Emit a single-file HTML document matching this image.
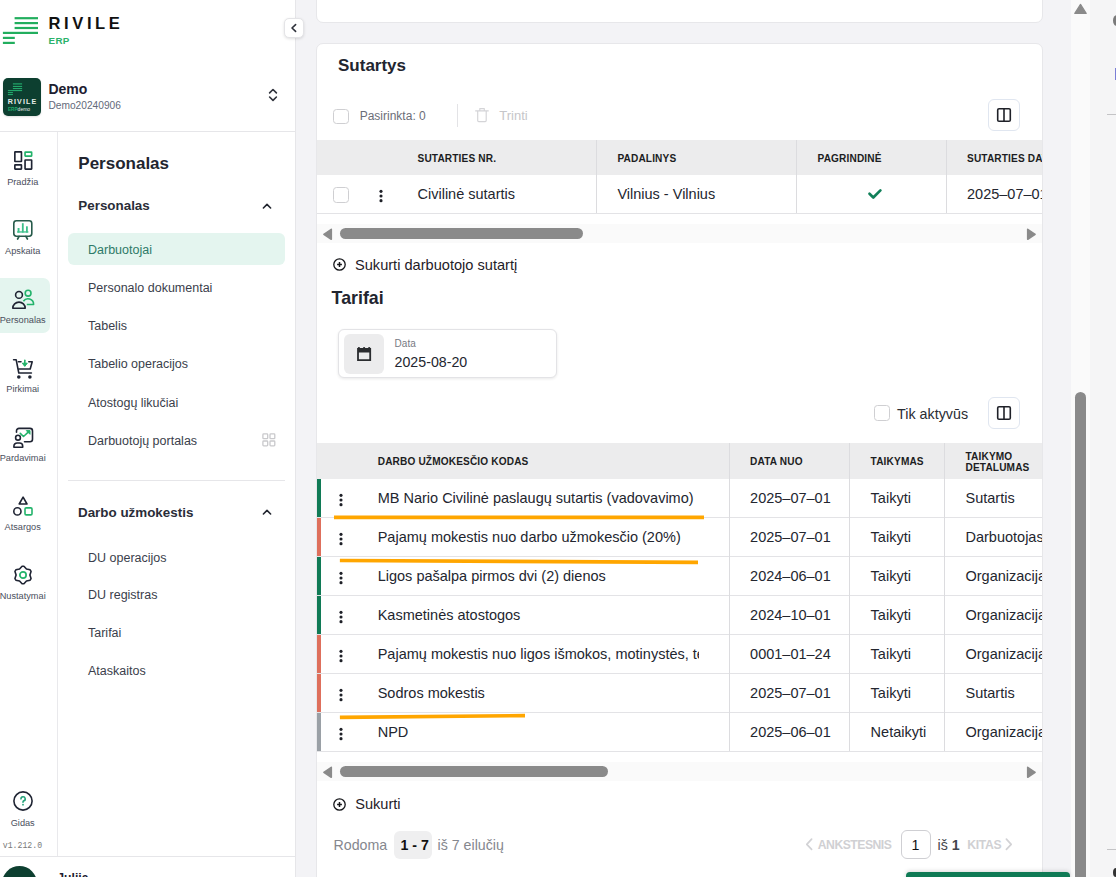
<!DOCTYPE html>
<html><head><meta charset="utf-8"><style>
html,body{margin:0;padding:0;width:1116px;height:877px;overflow:hidden;background:#f3f3f6}
body{position:relative;font-family:"Liberation Sans",sans-serif}
.t{position:absolute;line-height:1;white-space:nowrap}
</style></head><body>
<div style="position:absolute;left:0px;top:0px;width:1116px;height:877px;background:#f3f3f6"></div>
<div style="position:absolute;left:0px;top:0px;width:296px;height:877px;background:#fff;border-right:1px solid #e6e6e9;box-sizing:border-box"></div>
<div style="position:absolute;left:1071px;top:0px;width:19px;height:877px;background:#fafafa"></div>
<div style="position:absolute;left:1090px;top:0px;width:26px;height:877px;background:#f5f5f6"></div>
<div style="position:absolute;left:316px;top:-20px;width:727px;height:43px;background:#fff;border:1px solid #e7e7ea;border-radius:7px;box-sizing:border-box"></div>
<div style="position:absolute;left:316px;top:43px;width:727px;height:900px;background:#fff;border:1px solid #e7e7ea;border-radius:7px;box-sizing:border-box"></div>
<svg style="position:absolute;left:0;top:0" width="60" height="50" viewBox="0 0 60 50">
<g fill="#22ae5e">
<rect x="14.6" y="17.1" width="23.4" height="2.2"/>
<rect x="14.6" y="22.0" width="23.4" height="2.2"/>
<rect x="14.6" y="26.9" width="23.4" height="2.2"/>
<rect x="2.9" y="31.8" width="35.1" height="2.2"/>
<rect x="2.9" y="36.8" width="11.9" height="2.2"/>
<rect x="2.9" y="41.8" width="11.9" height="2.2"/>
</g></svg>
<div class="t" style="left:48.60px;top:15.23px;font-size:16.5px;font-weight:700;color:#111;font-family:'Liberation Sans', sans-serif;letter-spacing:3.6px">RIVILE</div>
<div class="t" style="left:48.60px;top:35.80px;font-size:9.8px;font-weight:700;color:#2bb26b;font-family:'Liberation Sans', sans-serif;letter-spacing:0.3px">ERP</div>
<div style="position:absolute;left:3px;top:78px;width:38px;height:38px;border-radius:5px;background:#0d3f30;overflow:hidden;box-shadow:0 1px 2px rgba(0,0,0,.12)">
<svg style="position:absolute;left:0;top:0" width="38" height="38" viewBox="0 0 38 38">
<g fill="#22a86a">
<rect x="9.9" y="5.3" width="9.2" height="1.2"/>
<rect x="9.9" y="7.9" width="9.2" height="1.1"/>
<rect x="9.9" y="10" width="9.2" height="1.1"/>
<rect x="4.9" y="12" width="14.2" height="1.1"/>
<rect x="4.9" y="14" width="5" height="1.1"/>
<rect x="4.9" y="16" width="5" height="1.1"/>
</g>
<text x="4.8" y="26.2" font-family="Liberation Sans" font-weight="700" font-size="7.1" fill="#e6ece8" letter-spacing="1.1">RIVILE</text>
<text transform="translate(4.9 32.8) scale(0.47)" x="0" y="0" font-family="Liberation Sans" font-weight="700" font-size="10" fill="#22a86a">ERP</text>
<text transform="translate(14.6 32.8) scale(0.5)" x="0" y="0" font-family="Liberation Sans" font-weight="400" font-size="10" fill="#e6ece8">demo</text>
</svg></div>
<div class="t" style="left:48.40px;top:82.35px;font-size:14px;font-weight:700;color:#1d2030;font-family:'Liberation Sans', sans-serif;">Demo</div>
<div class="t" style="left:48.40px;top:100.57px;font-size:10.2px;font-weight:400;color:#646a7a;font-family:'Liberation Sans', sans-serif;">Demo20240906</div>
<svg style="position:absolute;left:266px;top:86px" width="14" height="18" viewBox="0 0 14 18">
<path d="M3.6 6.9 L7 3.5 L10.4 6.9 M3.6 11 L7 14.4 L10.4 11" fill="none" stroke="#2f323b" stroke-width="1.6" stroke-linecap="round" stroke-linejoin="round"/></svg>
<div style="position:absolute;left:0px;top:131px;width:295px;height:1px;background:#e6e6e9"></div>
<div style="position:absolute;left:57px;top:132px;width:1px;height:724px;background:#e9e9ec"></div>
<div style="position:absolute;left:0px;top:856px;width:295px;height:1px;background:#e6e6e9"></div>
<div style="position:absolute;left:284px;top:18px;width:19.5px;height:19.5px;box-sizing:border-box;background:#fff;border:1px solid #e4e4e7;border-radius:5px;box-shadow:0 1px 3px rgba(0,0,0,.12)">
<svg style="position:absolute;left:0;top:0" width="17" height="17" viewBox="0 0 17 17"><path d="M10.6 5.6 L7 9 L10.6 12.4" fill="none" stroke="#2f323b" stroke-width="1.6" stroke-linecap="round" stroke-linejoin="round"/></svg></div>
<div style="position:absolute;left:0px;top:278px;width:50px;height:55px;background:#e4f5ef;border-radius:0 7px 7px 0"></div>
<svg style="position:absolute;left:13.7px;top:151.3px" width="19" height="19" viewBox="0 0 19 19" fill="none" stroke-width="1.65">
<rect x="0.85" y="0.85" width="6.6" height="9.6" rx="0.3" stroke="#1f2433"/>
<rect x="11.05" y="1.15" width="6.6" height="3.9" rx="0.3" stroke="#23b36b"/>
<rect x="0.85" y="13.85" width="6.6" height="4.2" rx="0.3" stroke="#1f2433"/>
<rect x="11.05" y="8.95" width="6.6" height="9.1" rx="0.3" stroke="#1f2433"/>
</svg>
<div class="t" style="left:-7.3px;width:60px;text-align:center;top:178.01px;font-size:9.2px;color:#4a4e5c">Pradžia</div>
<svg style="position:absolute;left:13.3px;top:220.1px" width="20" height="20" viewBox="0 0 20 20" fill="none">
<rect x="0.8" y="0.8" width="18" height="15.4" rx="2.6" stroke="#275b4b" stroke-width="1.6"/>
<path d="M6.1 16.4 L4.6 19 M12.9 16.4 L14.4 19" stroke="#275b4b" stroke-width="1.7" stroke-linecap="round"/>
<g fill="#3dc08b"><rect x="4.6" y="8" width="1.9" height="4.6"/><rect x="8.9" y="3.2" width="1.8" height="9.4"/><rect x="13" y="6.3" width="1.8" height="6.3"/><rect x="4.1" y="11.3" width="11.3" height="1.3"/></g>
</svg>
<div class="t" style="left:-7.3px;width:60px;text-align:center;top:246.61px;font-size:9.2px;color:#4a4e5c">Apskaita</div>
<svg style="position:absolute;left:11px;top:288px" width="25" height="23" viewBox="0 0 25 23" fill="none" stroke-width="1.6">
<circle cx="8" cy="6.9" r="3.4" stroke="#1f2433"/>
<path d="M1.8 20.3 A6.2 6.2 0 0 1 14.2 20.3 Z" stroke="#1f2433" stroke-linejoin="round"/>
<circle cx="17.1" cy="5.2" r="2.9" stroke="#23b36b"/>
<path d="M12.4 13.2 A5.6 5.6 0 0 1 22.6 16.5 L15.8 16.5" stroke="#23b36b" stroke-linejoin="round"/>
</svg>
<div class="t" style="left:-7.3px;width:60px;text-align:center;top:315.91px;font-size:9.2px;color:#4a4e5c">Personalas</div>
<svg style="position:absolute;left:12px;top:357.5px" width="22" height="22" viewBox="0 0 22 22" fill="none">
<path d="M1.6 1.8 H4.2 L6.8 15 H19.4" stroke="#1f2433" stroke-width="1.6" stroke-linecap="round" stroke-linejoin="round"/>
<path d="M6.4 3.8 H9 M16.8 3.8 H20.2 L18.2 11 H6.8" stroke="#1f2433" stroke-width="1.6" stroke-linecap="round" stroke-linejoin="round"/>
<circle cx="6.8" cy="19" r="1.8" fill="#1f2433"/><circle cx="17.9" cy="19" r="1.8" fill="#1f2433"/>
<path d="M12.8 2.2 V6.8" stroke="#23b36b" stroke-width="1.6" stroke-linecap="round"/>
<path d="M10.3 5.2 H15.3 L12.8 8.4 Z" fill="#23b36b" stroke="#23b36b" stroke-width="1" stroke-linejoin="round"/>
</svg>
<div class="t" style="left:-7.3px;width:60px;text-align:center;top:385.11px;font-size:9.2px;color:#4a4e5c">Pirkimai</div>
<svg style="position:absolute;left:12px;top:426.5px" width="22" height="22" viewBox="0 0 22 22" fill="none">
<path d="M4.5 5.3 V3.9 A2.5 2.5 0 0 1 7 1.4 H18 A2.5 2.5 0 0 1 20.5 3.9 V12.3 A2.5 2.5 0 0 1 18 14.8 H12.5" stroke="#1f2433" stroke-width="1.6" stroke-linecap="round"/>
<circle cx="6" cy="10.7" r="2.4" stroke="#1f2433" stroke-width="1.6"/>
<path d="M1.9 20.2 V19.2 A3.2 3.2 0 0 1 5.1 16 H7.5 A3.2 3.2 0 0 1 10.7 19.2 V20.2 Z" stroke="#1f2433" stroke-width="1.6" stroke-linejoin="round"/>
<path d="M8.3 6.4 L11.5 9.5 L16.5 4.9" stroke="#23b36b" stroke-width="1.6" stroke-linecap="round" stroke-linejoin="round"/>
<path d="M14.3 3.6 H18 V7.3 Z" fill="#23b36b" stroke="#23b36b" stroke-width="1" stroke-linejoin="round"/>
</svg>
<div class="t" style="left:-7.3px;width:60px;text-align:center;top:454.01px;font-size:9.2px;color:#4a4e5c">Pardavimai</div>
<svg style="position:absolute;left:12px;top:495px" width="22" height="22" viewBox="0 0 22 22" fill="none" stroke-width="1.6">
<path d="M11.1 2.1 L15 9 H7.2 Z" stroke="#1f2433" stroke-linejoin="round"/>
<circle cx="5.4" cy="16.4" r="3.6" stroke="#1f2433"/>
<rect x="13" y="12.9" width="7" height="7" rx="1.2" stroke="#23b36b"/>
</svg>
<div class="t" style="left:-7.3px;width:60px;text-align:center;top:523.11px;font-size:9.2px;color:#4a4e5c">Atsargos</div>
<svg style="position:absolute;left:13px;top:564.8px" width="20" height="20" viewBox="0 0 20 20" fill="none">
<path d="M9.08 1.25 L10.92 1.25 L13.45 4.02 L17.12 4.83 L18.04 6.42 L16.90 10.00 L18.04 13.58 L17.12 15.17 L13.45 15.98 L10.92 18.75 L9.08 18.75 L6.55 15.98 L2.88 15.17 L1.96 13.58 L3.10 10.00 L1.96 6.42 L2.88 4.83 L6.55 4.02 Z" stroke="#1f2433" stroke-width="1.6" stroke-linejoin="round"/>
<circle cx="10" cy="10" r="3.15" stroke="#23b36b" stroke-width="1.7"/>
</svg>
<div class="t" style="left:-7.3px;width:60px;text-align:center;top:591.71px;font-size:9.2px;color:#4a4e5c">Nustatymai</div>
<svg style="position:absolute;left:13px;top:790.5px" width="20" height="20" viewBox="0 0 20 20" fill="none">
<circle cx="10" cy="10" r="9.1" stroke="#1f2433" stroke-width="1.6"/>
<path d="M8 7.9 A2.1 2.1 0 1 1 10.8 9.8 Q10 10.2 10 11 V11.3" stroke="#25a27a" stroke-width="1.6" stroke-linecap="round"/>
<circle cx="10" cy="13.7" r="0.9" fill="#25a27a"/>
</svg>
<div class="t" style="left:-7.3px;width:60px;text-align:center;top:818.81px;font-size:9.2px;color:#4a4e5c">Gidas</div>
<div class="t" style="left:2.80px;top:841.97px;font-size:8.2px;font-weight:400;color:#7a7a7a;font-family:'Liberation Mono', monospace;">v1.212.0</div>
<div style="position:absolute;left:2.2px;top:866px;width:35px;height:35px;background:#0d3f30;border-radius:50%"></div>
<div class="t" style="left:57.30px;top:871.67px;font-size:12.2px;font-weight:700;color:#1d2030;font-family:'Liberation Sans', sans-serif;">Julija</div>
<div class="t" style="left:78.30px;top:154.61px;font-size:17px;font-weight:700;color:#22252f;font-family:'Liberation Sans', sans-serif;">Personalas</div>
<div class="t" style="left:78.30px;top:198.96px;font-size:13.4px;font-weight:700;color:#2a2d38;font-family:'Liberation Sans', sans-serif;">Personalas</div>
<svg style="position:absolute;left:260px;top:200px" width="14" height="11" viewBox="0 0 14 11"><path d="M3.4 8 L7 4.4 L10.6 8" fill="none" stroke="#22252f" stroke-width="1.6" stroke-linecap="round" stroke-linejoin="round"/></svg>
<div style="position:absolute;left:68.2px;top:233.1px;width:216.5px;height:32.3px;background:#e4f5ef;border-radius:6px"></div>
<div class="t" style="left:88.00px;top:244.32px;font-size:12.5px;font-weight:400;color:#2e7a68;font-family:'Liberation Sans', sans-serif;">Darbuotojai</div>
<div class="t" style="left:88.00px;top:282.02px;font-size:12.5px;font-weight:400;color:#3a3e4b;font-family:'Liberation Sans', sans-serif;">Personalo dokumentai</div>
<div class="t" style="left:88.00px;top:320.32px;font-size:12.5px;font-weight:400;color:#3a3e4b;font-family:'Liberation Sans', sans-serif;">Tabelis</div>
<div class="t" style="left:88.00px;top:358.32px;font-size:12.5px;font-weight:400;color:#3a3e4b;font-family:'Liberation Sans', sans-serif;">Tabelio operacijos</div>
<div class="t" style="left:88.00px;top:397.22px;font-size:12.5px;font-weight:400;color:#3a3e4b;font-family:'Liberation Sans', sans-serif;">Atostogų likučiai</div>
<div class="t" style="left:88.00px;top:435.12px;font-size:12.5px;font-weight:400;color:#3a3e4b;font-family:'Liberation Sans', sans-serif;">Darbuotojų portalas</div>
<svg style="position:absolute;left:262px;top:433px" width="14" height="14" viewBox="0 0 14 14" fill="none" stroke="#c9c9cc" stroke-width="1.3">
<rect x="0.9" y="0.9" width="4.8" height="4.8" rx="0.8"/><rect x="8" y="0.9" width="4.8" height="4.8" rx="0.8"/>
<rect x="0.9" y="8" width="4.8" height="4.8" rx="0.8"/><rect x="8" y="8" width="4.8" height="4.8" rx="0.8"/></svg>
<div style="position:absolute;left:68px;top:480px;width:217px;height:1px;background:#e6e6e9"></div>
<div class="t" style="left:78.00px;top:505.66px;font-size:13.4px;font-weight:700;color:#2a2d38;font-family:'Liberation Sans', sans-serif;">Darbo užmokestis</div>
<svg style="position:absolute;left:260px;top:506px" width="14" height="11" viewBox="0 0 14 11"><path d="M3.4 8 L7 4.4 L10.6 8" fill="none" stroke="#22252f" stroke-width="1.6" stroke-linecap="round" stroke-linejoin="round"/></svg>
<div class="t" style="left:88.00px;top:551.82px;font-size:12.5px;font-weight:400;color:#3a3e4b;font-family:'Liberation Sans', sans-serif;">DU operacijos</div>
<div class="t" style="left:88.00px;top:589.32px;font-size:12.5px;font-weight:400;color:#3a3e4b;font-family:'Liberation Sans', sans-serif;">DU registras</div>
<div class="t" style="left:88.00px;top:627.32px;font-size:12.5px;font-weight:400;color:#3a3e4b;font-family:'Liberation Sans', sans-serif;">Tarifai</div>
<div class="t" style="left:88.00px;top:665.32px;font-size:12.5px;font-weight:400;color:#3a3e4b;font-family:'Liberation Sans', sans-serif;">Ataskaitos</div>
<div class="t" style="left:338.00px;top:57.01px;font-size:17px;font-weight:700;color:#22252f;font-family:'Liberation Sans', sans-serif;">Sutartys</div>
<div style="position:absolute;left:333.2px;top:108.5px;width:15.7px;height:15.7px;box-sizing:border-box;border:1px solid #cfcfd2;border-radius:3.5px;background:#fff"></div>
<div class="t" style="left:359.70px;top:109.84px;font-size:12px;font-weight:400;color:#6b6e78;font-family:'Liberation Sans', sans-serif;">Pasirinkta: 0</div>
<div style="position:absolute;left:457px;top:103.5px;width:1px;height:23px;background:#e3e3e6"></div>
<svg style="position:absolute;left:474px;top:107px" width="16" height="16" viewBox="0 0 16 16" fill="none" stroke="#d4d4d7" stroke-width="1.15" stroke-linejoin="round">
<path d="M1.2 3.9 H14.7 M5.8 3.9 V1.6 H10.3 V3.9 M3.7 3.9 V13.6 A1 1 0 0 0 4.7 14.6 H11.2 A1 1 0 0 0 12.2 13.6 V3.9"/></svg>
<div class="t" style="left:499.30px;top:109.00px;font-size:13px;font-weight:400;color:#c6c6c9;font-family:'Liberation Sans', sans-serif;">Trinti</div>
<div style="position:absolute;left:988px;top:99px;width:32px;height:32px;box-sizing:border-box;border:1px solid #e0e6f0;border-radius:6px;background:#fff">
<svg style="position:absolute;left:7.0px;top:7.0px" width="16" height="16" viewBox="0 0 16 16" fill="none" stroke="#1f2128" stroke-width="1.6">
<rect x="1.7" y="1.7" width="12.6" height="12.6" rx="1.3"/><path d="M8 1.6 V14.4"/></svg></div>
<div style="position:absolute;left:317px;top:140px;width:725px;height:34.5px;background:#ececed"></div>
<div style="position:absolute;left:317px;top:212.8px;width:725px;height:1px;background:#e3e3e6"></div>
<div style="position:absolute;left:596px;top:140px;width:1px;height:73px;background:#dcdcdf"></div>
<div style="position:absolute;left:796px;top:140px;width:1px;height:73px;background:#dcdcdf"></div>
<div style="position:absolute;left:946px;top:140px;width:1px;height:73px;background:#dcdcdf"></div>
<div class="t" style="left:417.50px;top:153.65px;font-size:10.1px;font-weight:700;color:#1c1d22;font-family:'Liberation Sans', sans-serif;letter-spacing:0.15px">SUTARTIES NR.</div>
<div class="t" style="left:617.40px;top:153.65px;font-size:10.1px;font-weight:700;color:#1c1d22;font-family:'Liberation Sans', sans-serif;letter-spacing:0.15px">PADALINYS</div>
<div class="t" style="left:817.50px;top:153.65px;font-size:10.1px;font-weight:700;color:#1c1d22;font-family:'Liberation Sans', sans-serif;letter-spacing:0.15px">PAGRINDINĖ</div>
<div style="position:absolute;left:317px;top:140px;width:725px;height:80px;overflow:hidden">
<div class="t" style="left:650.00px;top:13.65px;font-size:10.1px;font-weight:700;color:#1c1d22;font-family:'Liberation Sans', sans-serif;letter-spacing:0.15px">SUTARTIES DATA</div>
<div class="t" style="left:650.00px;top:47.13px;font-size:14.5px;font-weight:400;color:#23262f;font-family:'Liberation Sans', sans-serif;">2025–07–01</div>
</div>
<div style="position:absolute;left:333.2px;top:187px;width:15.7px;height:15.7px;box-sizing:border-box;border:1px solid #cfcfd2;border-radius:3.5px;background:#fff"></div>
<svg style="position:absolute;left:377.7px;top:188px" width="6" height="16" viewBox="0 0 6 16" fill="#1f2128"><circle cx="3" cy="3.35" r="1.55"/><circle cx="3" cy="8" r="1.55"/><circle cx="3" cy="12.65" r="1.55"/></svg>
<div class="t" style="left:417.50px;top:187.13px;font-size:14.5px;font-weight:400;color:#23262f;font-family:'Liberation Sans', sans-serif;">Civilinė sutartis</div>
<div class="t" style="left:617.40px;top:187.13px;font-size:14.5px;font-weight:400;color:#23262f;font-family:'Liberation Sans', sans-serif;">Vilnius - Vilnius</div>
<svg style="position:absolute;left:865px;top:186px" width="19" height="15" viewBox="0 0 19 15"><path d="M4.5 7.8 L8.3 11.5 L15.4 4.4" fill="none" stroke="#12805a" stroke-width="2.7" stroke-linecap="round" stroke-linejoin="round"/></svg>
<div style="position:absolute;left:317px;top:224px;width:725px;height:19px;background:#fafafa"></div>
<svg style="position:absolute;left:322px;top:227px" width="12" height="14" viewBox="0 0 12 14"><path d="M9.3 2.3 V12.3 L1.9 7.3 Z" fill="#8a8a8a" stroke="#8a8a8a" stroke-width="1.6" stroke-linejoin="round"/></svg>
<div style="position:absolute;left:340px;top:228px;width:243px;height:11px;background:#8a8a8a;border-radius:6px"></div>
<svg style="position:absolute;left:1025px;top:227px" width="12" height="14" viewBox="0 0 12 14"><path d="M2.7 2.3 V12.3 L10.1 7.3 Z" fill="#8a8a8a" stroke="#8a8a8a" stroke-width="1.6" stroke-linejoin="round"/></svg>
<svg style="position:absolute;left:332.05px;top:256.95px" width="15" height="15" viewBox="0 0 15 15" fill="none" stroke="#15161a" stroke-width="1.3">
<circle cx="7.5" cy="7.5" r="5.7"/><path d="M7.5 5.1 V9.9 M5.1 7.5 H9.9" stroke-linecap="butt" stroke-width="1.5"/></svg>
<div class="t" style="left:355.00px;top:258.14px;font-size:14.6px;font-weight:400;color:#1f2128;font-family:'Liberation Sans', sans-serif;">Sukurti darbuotojo sutartį</div>
<div class="t" style="left:331.60px;top:289.93px;font-size:17.8px;font-weight:700;color:#22252f;font-family:'Liberation Sans', sans-serif;">Tarifai</div>
<div style="position:absolute;left:337.5px;top:329.2px;width:219px;height:49px;box-sizing:border-box;border:1px solid #e3e3e6;border-radius:6px;background:#fff;box-shadow:0 1px 3px rgba(0,0,0,.09)"></div>
<div style="position:absolute;left:344px;top:334px;width:40px;height:40px;background:#ececed;border-radius:6px"></div>
<svg style="position:absolute;left:356px;top:346px" width="16" height="16" viewBox="0 0 16 16">
<path fill-rule="evenodd" fill="#2a2c2f" d="M1.1 1.9 H15.1 V15.1 H1.1 Z M2.9 6.4 V13.2 H13.3 V6.4 Z"/>
<circle cx="2.9" cy="2" r="1.1" fill="#2a2c2f"/><circle cx="8.1" cy="2" r="1.1" fill="#2a2c2f"/><circle cx="13.2" cy="2" r="1.1" fill="#2a2c2f"/>
</svg>
<div class="t" style="left:394.60px;top:338.74px;font-size:10px;font-weight:400;color:#777a82;font-family:'Liberation Sans', sans-serif;">Data</div>
<div class="t" style="left:394.60px;top:354.98px;font-size:14.2px;font-weight:400;color:#23262f;font-family:'Liberation Sans', sans-serif;">2025-08-20</div>
<div style="position:absolute;left:874.3px;top:404.9px;width:15.7px;height:15.7px;box-sizing:border-box;border:1px solid #cfcfd2;border-radius:3.5px;background:#fff"></div>
<div class="t" style="left:897.10px;top:406.90px;font-size:14.3px;font-weight:400;color:#2a2c33;font-family:'Liberation Sans', sans-serif;">Tik aktyvūs</div>
<div style="position:absolute;left:988px;top:397px;width:32px;height:31.5px;box-sizing:border-box;border:1px solid #e0e6f0;border-radius:6px;background:#fff">
<svg style="position:absolute;left:7.0px;top:6.8px" width="16" height="16" viewBox="0 0 16 16" fill="none" stroke="#1f2128" stroke-width="1.6">
<rect x="1.7" y="1.7" width="12.6" height="12.6" rx="1.3"/><path d="M8 1.6 V14.4"/></svg></div>
<div style="position:absolute;left:317px;top:443px;width:725px;height:36px;background:#ececed"></div>
<div style="position:absolute;left:317px;top:517px;width:725px;height:1px;background:#e3e3e6"></div>
<div style="position:absolute;left:317px;top:556px;width:725px;height:1px;background:#e3e3e6"></div>
<div style="position:absolute;left:317px;top:595px;width:725px;height:1px;background:#e3e3e6"></div>
<div style="position:absolute;left:317px;top:634px;width:725px;height:1px;background:#e3e3e6"></div>
<div style="position:absolute;left:317px;top:673px;width:725px;height:1px;background:#e3e3e6"></div>
<div style="position:absolute;left:317px;top:712px;width:725px;height:1px;background:#e3e3e6"></div>
<div style="position:absolute;left:317px;top:751px;width:725px;height:1px;background:#e3e3e6"></div>
<div style="position:absolute;left:729px;top:443px;width:1px;height:308px;background:#dcdcdf"></div>
<div style="position:absolute;left:849px;top:443px;width:1px;height:308px;background:#dcdcdf"></div>
<div style="position:absolute;left:944px;top:443px;width:1px;height:308px;background:#dcdcdf"></div>
<div class="t" style="left:377.70px;top:457.05px;font-size:10.1px;font-weight:700;color:#1c1d22;font-family:'Liberation Sans', sans-serif;letter-spacing:0.15px">DARBO UŽMOKESČIO KODAS</div>
<div class="t" style="left:750.10px;top:457.05px;font-size:10.1px;font-weight:700;color:#1c1d22;font-family:'Liberation Sans', sans-serif;letter-spacing:0.15px">DATA NUO</div>
<div class="t" style="left:870.60px;top:457.05px;font-size:10.1px;font-weight:700;color:#1c1d22;font-family:'Liberation Sans', sans-serif;letter-spacing:0.15px">TAIKYMAS</div>
<div class="t" style="left:965.50px;top:452.05px;font-size:10.1px;font-weight:700;color:#1c1d22;font-family:'Liberation Sans', sans-serif;letter-spacing:0.15px">TAIKYMO</div>
<div class="t" style="left:965.50px;top:463.25px;font-size:10.1px;font-weight:700;color:#1c1d22;font-family:'Liberation Sans', sans-serif;letter-spacing:0.15px">DETALUMAS</div>
<div style="position:absolute;left:317px;top:479px;width:4px;height:38px;background:#107a56"></div>
<svg style="position:absolute;left:338.2px;top:491.7px" width="6" height="16" viewBox="0 0 6 16" fill="#1f2128"><circle cx="3" cy="3.35" r="1.55"/><circle cx="3" cy="8" r="1.55"/><circle cx="3" cy="12.65" r="1.55"/></svg>
<div style="position:absolute;left:377px;top:479px;width:322px;height:38px;overflow:hidden">
<div class="t" style="left:0.70px;top:11.93px;font-size:14.5px;font-weight:400;color:#23262f;font-family:'Liberation Sans', sans-serif;">MB Nario Civilinė paslaugų sutartis (vadovavimo)</div>
</div>
<div class="t" style="left:750.10px;top:490.93px;font-size:14.5px;font-weight:400;color:#23262f;font-family:'Liberation Sans', sans-serif;">2025–07–01</div>
<div class="t" style="left:870.60px;top:490.93px;font-size:14.5px;font-weight:400;color:#23262f;font-family:'Liberation Sans', sans-serif;">Taikyti</div>
<div style="position:absolute;left:960px;top:479px;width:82px;height:38px;overflow:hidden">
<div class="t" style="left:5.50px;top:11.93px;font-size:14.5px;font-weight:400;color:#23262f;font-family:'Liberation Sans', sans-serif;">Sutartis</div>
</div>
<div style="position:absolute;left:317px;top:518px;width:4px;height:38px;background:#de6f5c"></div>
<svg style="position:absolute;left:338.2px;top:530.7px" width="6" height="16" viewBox="0 0 6 16" fill="#1f2128"><circle cx="3" cy="3.35" r="1.55"/><circle cx="3" cy="8" r="1.55"/><circle cx="3" cy="12.65" r="1.55"/></svg>
<div style="position:absolute;left:377px;top:518px;width:322px;height:38px;overflow:hidden">
<div class="t" style="left:0.70px;top:11.93px;font-size:14.5px;font-weight:400;color:#23262f;font-family:'Liberation Sans', sans-serif;">Pajamų mokestis nuo darbo užmokesčio (20%)</div>
</div>
<div class="t" style="left:750.10px;top:529.93px;font-size:14.5px;font-weight:400;color:#23262f;font-family:'Liberation Sans', sans-serif;">2025–07–01</div>
<div class="t" style="left:870.60px;top:529.93px;font-size:14.5px;font-weight:400;color:#23262f;font-family:'Liberation Sans', sans-serif;">Taikyti</div>
<div style="position:absolute;left:960px;top:518px;width:82px;height:38px;overflow:hidden">
<div class="t" style="left:5.50px;top:11.93px;font-size:14.5px;font-weight:400;color:#23262f;font-family:'Liberation Sans', sans-serif;">Darbuotojas</div>
</div>
<div style="position:absolute;left:317px;top:557px;width:4px;height:38px;background:#107a56"></div>
<svg style="position:absolute;left:338.2px;top:569.7px" width="6" height="16" viewBox="0 0 6 16" fill="#1f2128"><circle cx="3" cy="3.35" r="1.55"/><circle cx="3" cy="8" r="1.55"/><circle cx="3" cy="12.65" r="1.55"/></svg>
<div style="position:absolute;left:377px;top:557px;width:322px;height:38px;overflow:hidden">
<div class="t" style="left:0.70px;top:11.93px;font-size:14.5px;font-weight:400;color:#23262f;font-family:'Liberation Sans', sans-serif;">Ligos pašalpa pirmos dvi (2) dienos</div>
</div>
<div class="t" style="left:750.10px;top:568.93px;font-size:14.5px;font-weight:400;color:#23262f;font-family:'Liberation Sans', sans-serif;">2024–06–01</div>
<div class="t" style="left:870.60px;top:568.93px;font-size:14.5px;font-weight:400;color:#23262f;font-family:'Liberation Sans', sans-serif;">Taikyti</div>
<div style="position:absolute;left:960px;top:557px;width:82px;height:38px;overflow:hidden">
<div class="t" style="left:5.50px;top:11.93px;font-size:14.5px;font-weight:400;color:#23262f;font-family:'Liberation Sans', sans-serif;">Organizacija</div>
</div>
<div style="position:absolute;left:317px;top:596px;width:4px;height:38px;background:#107a56"></div>
<svg style="position:absolute;left:338.2px;top:608.7px" width="6" height="16" viewBox="0 0 6 16" fill="#1f2128"><circle cx="3" cy="3.35" r="1.55"/><circle cx="3" cy="8" r="1.55"/><circle cx="3" cy="12.65" r="1.55"/></svg>
<div style="position:absolute;left:377px;top:596px;width:322px;height:38px;overflow:hidden">
<div class="t" style="left:0.70px;top:11.93px;font-size:14.5px;font-weight:400;color:#23262f;font-family:'Liberation Sans', sans-serif;">Kasmetinės atostogos</div>
</div>
<div class="t" style="left:750.10px;top:607.93px;font-size:14.5px;font-weight:400;color:#23262f;font-family:'Liberation Sans', sans-serif;">2024–10–01</div>
<div class="t" style="left:870.60px;top:607.93px;font-size:14.5px;font-weight:400;color:#23262f;font-family:'Liberation Sans', sans-serif;">Taikyti</div>
<div style="position:absolute;left:960px;top:596px;width:82px;height:38px;overflow:hidden">
<div class="t" style="left:5.50px;top:11.93px;font-size:14.5px;font-weight:400;color:#23262f;font-family:'Liberation Sans', sans-serif;">Organizacija</div>
</div>
<div style="position:absolute;left:317px;top:635px;width:4px;height:38px;background:#de6f5c"></div>
<svg style="position:absolute;left:338.2px;top:647.7px" width="6" height="16" viewBox="0 0 6 16" fill="#1f2128"><circle cx="3" cy="3.35" r="1.55"/><circle cx="3" cy="8" r="1.55"/><circle cx="3" cy="12.65" r="1.55"/></svg>
<div style="position:absolute;left:377px;top:635px;width:322px;height:38px;overflow:hidden">
<div class="t" style="left:0.70px;top:11.93px;font-size:14.5px;font-weight:400;color:#23262f;font-family:'Liberation Sans', sans-serif;">Pajamų mokestis nuo ligos išmokos, motinystės, tėvystės</div>
</div>
<div class="t" style="left:750.10px;top:646.93px;font-size:14.5px;font-weight:400;color:#23262f;font-family:'Liberation Sans', sans-serif;">0001–01–24</div>
<div class="t" style="left:870.60px;top:646.93px;font-size:14.5px;font-weight:400;color:#23262f;font-family:'Liberation Sans', sans-serif;">Taikyti</div>
<div style="position:absolute;left:960px;top:635px;width:82px;height:38px;overflow:hidden">
<div class="t" style="left:5.50px;top:11.93px;font-size:14.5px;font-weight:400;color:#23262f;font-family:'Liberation Sans', sans-serif;">Organizacija</div>
</div>
<div style="position:absolute;left:317px;top:674px;width:4px;height:38px;background:#de6f5c"></div>
<svg style="position:absolute;left:338.2px;top:686.7px" width="6" height="16" viewBox="0 0 6 16" fill="#1f2128"><circle cx="3" cy="3.35" r="1.55"/><circle cx="3" cy="8" r="1.55"/><circle cx="3" cy="12.65" r="1.55"/></svg>
<div style="position:absolute;left:377px;top:674px;width:322px;height:38px;overflow:hidden">
<div class="t" style="left:0.70px;top:11.93px;font-size:14.5px;font-weight:400;color:#23262f;font-family:'Liberation Sans', sans-serif;">Sodros mokestis</div>
</div>
<div class="t" style="left:750.10px;top:685.93px;font-size:14.5px;font-weight:400;color:#23262f;font-family:'Liberation Sans', sans-serif;">2025–07–01</div>
<div class="t" style="left:870.60px;top:685.93px;font-size:14.5px;font-weight:400;color:#23262f;font-family:'Liberation Sans', sans-serif;">Taikyti</div>
<div style="position:absolute;left:960px;top:674px;width:82px;height:38px;overflow:hidden">
<div class="t" style="left:5.50px;top:11.93px;font-size:14.5px;font-weight:400;color:#23262f;font-family:'Liberation Sans', sans-serif;">Sutartis</div>
</div>
<div style="position:absolute;left:317px;top:713px;width:4px;height:38px;background:#9aa0a6"></div>
<svg style="position:absolute;left:338.2px;top:725.7px" width="6" height="16" viewBox="0 0 6 16" fill="#1f2128"><circle cx="3" cy="3.35" r="1.55"/><circle cx="3" cy="8" r="1.55"/><circle cx="3" cy="12.65" r="1.55"/></svg>
<div style="position:absolute;left:377px;top:713px;width:322px;height:38px;overflow:hidden">
<div class="t" style="left:0.70px;top:11.93px;font-size:14.5px;font-weight:400;color:#23262f;font-family:'Liberation Sans', sans-serif;">NPD</div>
</div>
<div class="t" style="left:750.10px;top:724.93px;font-size:14.5px;font-weight:400;color:#23262f;font-family:'Liberation Sans', sans-serif;">2025–06–01</div>
<div class="t" style="left:870.60px;top:724.93px;font-size:14.5px;font-weight:400;color:#23262f;font-family:'Liberation Sans', sans-serif;">Netaikyti</div>
<div style="position:absolute;left:960px;top:713px;width:82px;height:38px;overflow:hidden">
<div class="t" style="left:5.50px;top:11.93px;font-size:14.5px;font-weight:400;color:#23262f;font-family:'Liberation Sans', sans-serif;">Organizacija</div>
</div>
<div style="position:absolute;left:317px;top:762px;width:725px;height:19px;background:#fafafa"></div>
<svg style="position:absolute;left:322px;top:765px" width="12" height="14" viewBox="0 0 12 14"><path d="M9.3 2.3 V12.3 L1.9 7.3 Z" fill="#8a8a8a" stroke="#8a8a8a" stroke-width="1.6" stroke-linejoin="round"/></svg>
<div style="position:absolute;left:340px;top:766px;width:268px;height:11px;background:#8a8a8a;border-radius:6px"></div>
<svg style="position:absolute;left:1025px;top:765px" width="12" height="14" viewBox="0 0 12 14"><path d="M2.7 2.3 V12.3 L10.1 7.3 Z" fill="#8a8a8a" stroke="#8a8a8a" stroke-width="1.6" stroke-linejoin="round"/></svg>
<svg style="position:absolute;left:332px;top:796.75px" width="15" height="15" viewBox="0 0 15 15" fill="none" stroke="#15161a" stroke-width="1.3">
<circle cx="7.5" cy="7.5" r="5.7"/><path d="M7.5 5.1 V9.9 M5.1 7.5 H9.9" stroke-linecap="butt" stroke-width="1.5"/></svg>
<div class="t" style="left:355.20px;top:796.64px;font-size:14.6px;font-weight:400;color:#1f2128;font-family:'Liberation Sans', sans-serif;">Sukurti</div>
<div class="t" style="left:333.50px;top:838.18px;font-size:14.2px;font-weight:400;color:#85878e;font-family:'Liberation Sans', sans-serif;">Rodoma</div>
<div style="position:absolute;left:394.3px;top:831.3px;width:37.6px;height:27.4px;background:#efeff0;border-radius:6px"></div>
<div class="t" style="left:400.50px;top:838.18px;font-size:14.2px;font-weight:700;color:#111;font-family:'Liberation Sans', sans-serif;">1 - 7</div>
<div class="t" style="left:437.60px;top:838.18px;font-size:14.2px;font-weight:400;color:#85878e;font-family:'Liberation Sans', sans-serif;">iš 7 eilučių</div>
<svg style="position:absolute;left:803px;top:837px" width="12" height="15" viewBox="0 0 12 15"><path d="M8.6 2.2 L3.8 7.3 L8.6 12.4" fill="none" stroke="#d2d2d5" stroke-width="1.7" stroke-linecap="round" stroke-linejoin="round"/></svg>
<div class="t" style="left:817.80px;top:839.17px;font-size:12.2px;font-weight:700;color:#d0d0d3;font-family:'Liberation Sans', sans-serif;letter-spacing:-0.5px">ANKSTESNIS</div>
<div style="position:absolute;left:901px;top:830.2px;width:30px;height:29.2px;box-sizing:border-box;border:1px solid #cfcfd3;border-radius:6px;background:#fff"></div>
<div class="t" style="left:911.50px;top:837.98px;font-size:14.2px;font-weight:400;color:#111;font-family:'Liberation Sans', sans-serif;">1</div>
<div class="t" style="left:937.50px;top:837.98px;font-size:14.2px;font-weight:400;color:#44464d;font-family:'Liberation Sans', sans-serif;">iš <b>1</b></div>
<div class="t" style="left:967.30px;top:839.17px;font-size:12.2px;font-weight:700;color:#d0d0d3;font-family:'Liberation Sans', sans-serif;letter-spacing:-0.35px">KITAS</div>
<svg style="position:absolute;left:1002.5px;top:837px" width="12" height="15" viewBox="0 0 12 15"><path d="M3.4 2.2 L8.2 7.3 L3.4 12.4" fill="none" stroke="#d2d2d5" stroke-width="1.7" stroke-linecap="round" stroke-linejoin="round"/></svg>
<svg style="position:absolute;left:0;top:0" width="1116" height="877" viewBox="0 0 1116 877">
<g stroke="#ffa600" stroke-width="3.6" stroke-linecap="butt" fill="none">
<path d="M334 517.4 L704 517.4"/>
<path d="M339.9 560.5 L698 562.4"/>
<path d="M339.9 717.4 L525 715.6"/>
</g></svg>
<div style="position:absolute;left:906px;top:872px;width:164px;height:20px;background:#0f7a55;border-radius:4px 4px 0 0;box-shadow:0 -1px 4px rgba(0,0,0,.15)"></div>
<svg style="position:absolute;left:1072px;top:2px" width="17" height="14" viewBox="0 0 17 14"><path d="M8.5 2.4 L14.2 11.4 H2.8 Z" fill="#8a8a8a" stroke="#8a8a8a" stroke-width="1.2" stroke-linejoin="round"/></svg>
<div style="position:absolute;left:1075px;top:392px;width:11px;height:500px;background:#8a8a8a;border-radius:6px"></div>
<div style="position:absolute;left:1113px;top:15px;width:8px;height:11px;background:#7a7a7a;border-radius:50%"></div>
<div style="position:absolute;left:1115px;top:68.4px;width:3px;height:11.8px;background:#7b7fd6"></div>
<div style="position:absolute;left:1107px;top:114px;width:9px;height:1px;background:#c4c4c6"></div>
<div style="position:absolute;left:1107px;top:849px;width:9px;height:1px;background:#c4c4c6"></div>
<div style="position:absolute;left:1113px;top:868px;width:6px;height:9px;background:#333;border-radius:50%"></div>
</body></html>
